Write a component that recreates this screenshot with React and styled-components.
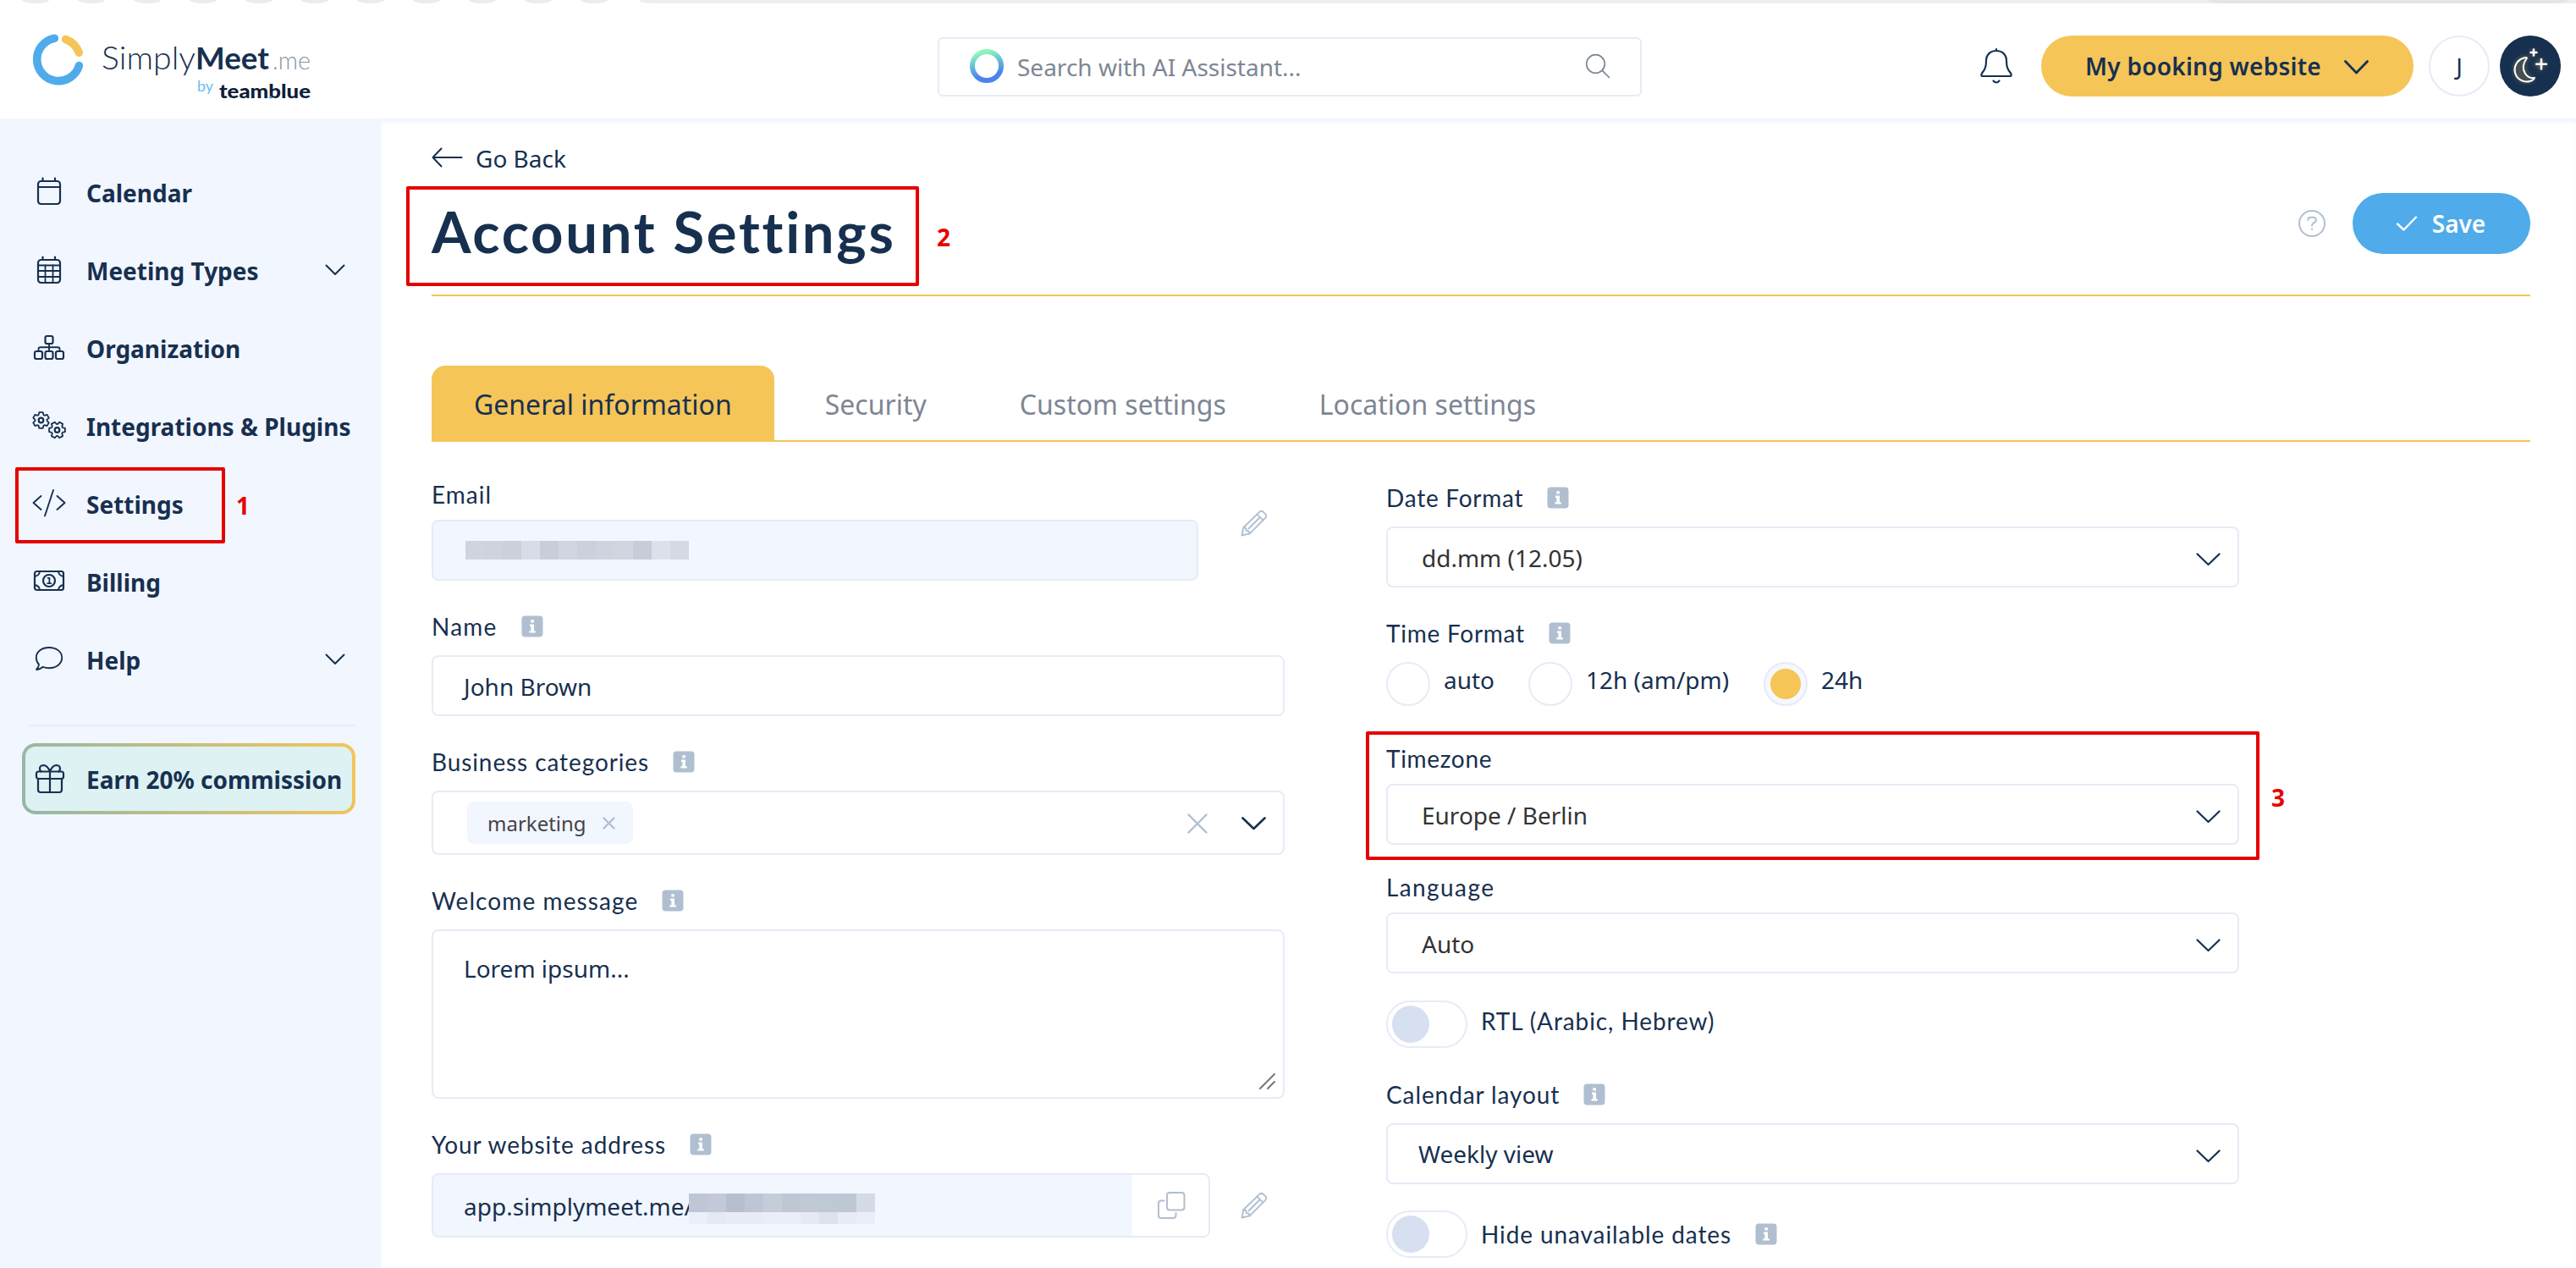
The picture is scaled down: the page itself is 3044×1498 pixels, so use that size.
import { useState } from "react";
import styled, { createGlobalStyle, css } from "styled-components";

const navy = "#17304f";
const yellow = "#f5c558";
const blue = "#4fabea";
const line = "#e7ebf7";
const pale = "#f2f6ff";
const grey = "#b0bfd0";
const red = "#e60000";
const sans = `"Noto Sans", "Open Sans", sans-serif`;
const round = `Lato, "Noto Sans", sans-serif`;

const GlobalStyle = createGlobalStyle`
  * { box-sizing: border-box; }
  body {
    margin: 0;
    background: #fff;
    color: ${navy};
    font-family: ${sans};
    font-size: 28px;
    line-height: 38px;
  }
  button { font: inherit; color: inherit; border: 0; background: none; padding: 0; }
`;

const Page = styled.div`
  position: relative;
  width: 3044px;
  height: 1498px;
  overflow: hidden;
`;

/* ---------- header ---------- */

const BrowserEdge = styled.div`
  display: flex;
  height: 4px;
  padding-left: 26px;
  gap: 34px;
  overflow: hidden;
`;

const EdgeDot = styled.i`
  width: 32px;
  height: 4px;
  background: #ececec;
  border-radius: 0 0 16px 16px / 0 0 4px 4px;
`;

const EdgeBar = styled.i`
  flex: 1;
  display: flex;
  justify-content: flex-end;
  padding-right: 10px;
  margin-left: 3px;
  background: #eeeeee;
  border-radius: 0 0 0 16px / 0 0 0 4px;

  &::after {
    content: "";
    width: 424px;
    background: #e5e5e5;
    border-radius: 0 0 16px 16px / 0 0 4px 4px;
  }
`;

const Header = styled.header`
  display: grid;
  grid-template-columns: 1070px 832px 1fr;
  align-items: center;
  height: 136px;
  padding: 12px 18px 0 38px;
`;

const SearchBox = styled.div`
  display: flex;
  align-items: center;
  height: 70px;
  margin-top: 2px;
  padding: 0 35px 2px 36px;
  border: 2px solid ${line};
  border-radius: 6px;
  color: #7d8694;
`;

const SearchText = styled.span`
  flex: 1;
  padding: 2px 0 0 16px;
`;

const HeaderTools = styled.div`
  display: flex;
  align-items: center;
  justify-content: flex-end;
`;

const SiteButton = styled.button`
  display: flex;
  align-items: center;
  width: 440px;
  height: 72px;
  margin-left: 33px;
  padding-left: 52px;
  gap: 27px;
  border-radius: 36px;
  background: ${yellow};
  font-weight: 600;
  letter-spacing: 0.25px;

  svg { margin-top: 3px; }
`;

const RoundButton = styled.button`
  display: flex;
  align-items: center;
  justify-content: center;
  width: 72px;
  height: 72px;
  margin-left: ${(p) => (p.$dark ? 12 : 18)}px;
  border-radius: 50%;
  border: ${(p) => (p.$dark ? "0" : `2px solid ${line}`)};
  background: ${(p) => (p.$dark ? navy : "#fff")};
`;

/* ---------- sidebar ---------- */

const Body = styled.div`
  display: flex;
  height: 1358px;
`;

const Sidebar = styled.nav`
  width: 450px;
  flex: none;
  padding-top: 41px;
  background: ${pale};
`;

const NavItem = styled.a`
  display: flex;
  align-items: center;
  height: 92px;
  padding: 0 42px 0 38px;
  gap: 24px;
  font-weight: 700;
  white-space: nowrap;

  span { flex: 1; padding-top: 2px; }
`;

const Divider = styled.hr`
  height: 2px;
  margin: 31px 30px 20px 34px;
  border: 0;
  background: #e6ebf7;
`;

const EarnLink = styled.a`
  display: flex;
  align-items: center;
  width: 394px;
  height: 84px;
  margin-left: 26px;
  padding: 2px 0 0 8px;
  gap: 24px;
  border: 4px solid transparent;
  border-radius: 16px;
  background: linear-gradient(#def1f3, #def1f3) padding-box,
    linear-gradient(75deg, #92b8a8, ${yellow}) border-box;
  font-weight: 700;
  white-space: nowrap;
`;

/* ---------- main ---------- */

const Main = styled.main`
  flex: 1;
  padding: 27px 54px 0 60px;
  box-shadow: inset 0 5px 4px -1px #eef5ff;
`;

const BackLink = styled.a`
  display: flex;
  align-items: center;
  gap: 15px;
  height: 38px;

  span { padding-top: 2px; }
`;

const TitleRow = styled.div`
  display: flex;
  justify-content: space-between;
  height: 145px;
  border-bottom: 2px solid ${yellow};
`;

const Title = styled.h1`
  margin: 28px 0 0;
  font: 700 67px/80px ${round};
  letter-spacing: 2.7px;
`;

const Actions = styled.div`
  display: flex;
  align-items: center;
  height: 72px;
  margin-top: 23px;
  gap: 31px;
`;

const SaveButton = styled.button`
  display: flex;
  align-items: center;
  justify-content: center;
  gap: 17px;
  width: 210px;
  height: 72px;
  padding-right: 2px;
  border-radius: 36px;
  background: ${blue};
  color: #fff;
  font-weight: 600;
`;

const Tabs = styled.div`
  display: flex;
  gap: 10px;
  height: 90px;
  margin-top: 82px;
  border-bottom: 2px solid ${yellow};
`;

const Tab = styled.button`
  padding: 4px 50px 0;
  font-size: 32px;
  color: #7d8694;
  ${(p) =>
    p.$active &&
    css`
      color: ${navy};
      background: ${yellow};
      border-radius: 16px 16px 0 0;
    `}
`;

const Columns = styled.div`
  display: grid;
  grid-template-columns: 1008px 1008px;
  column-gap: 120px;
`;

const Column = styled.div`
  display: flex;
  flex-direction: column;
  padding-top: ${(p) => p.$top}px;
`;

const Field = styled.div`
  margin-bottom: ${(p) => p.$space ?? 35}px;
`;

const Label = styled.div`
  display: flex;
  gap: 28px;
  height: ${(p) => (p.$info ? 53 : 49)}px;
  padding-top: 1px;
  font: 400 28px/36px ${round};
  letter-spacing: ${(p) => p.$ls ?? 0.9}px;
  white-space: nowrap;

  svg { margin-top: 5px; }
`;

const Control = styled.div`
  display: flex;
  align-items: center;
  width: ${(p) => p.$width ?? 1008}px;
  height: ${(p) => p.$height ?? 72}px;
  padding: 0 20px 0 ${(p) => p.$indent ?? 36}px;
  border: 2px solid ${line};
  border-radius: 8px;
  background: ${(p) => (p.$filled ? pale : "#fff")};
  color: ${(p) => (p.$dark ? "#333" : navy)};
  white-space: nowrap;
`;

const Value = styled.span`
  flex: ${(p) => (p.$fixed ? "none" : 1)};
  padding-top: ${(p) => (p.$high ? 0 : 2)}px;
`;

const ControlIcons = styled.span`
  display: flex;
  align-items: center;
  gap: 40px;
  margin-left: auto;
  padding-top: ${(p) => p.$drop ?? 6}px;
`;

const WithPencil = styled.div`
  display: flex;
  justify-content: space-between;
  align-items: ${(p) => (p.$raised ? "flex-start" : "center")};
  padding-right: 20px;

  > svg { margin-top: ${(p) => (p.$raised ? -12 : 0)}px; }
`;

const TextArea = styled.div`
  display: flex;
  justify-content: space-between;
  height: 200px;
  padding: 25px 8px 8px 36px;
  border: 2px solid ${line};
  border-radius: 8px;

  svg { align-self: flex-end; }
`;

const Tag = styled.span`
  display: flex;
  align-items: center;
  justify-content: space-between;
  width: 196px;
  height: 50px;
  padding: 1px 21px 0 24px;
  border-radius: 8px;
  background: ${pale};
  color: #444;
  font-size: 24px;
`;

const CopyCell = styled.div`
  display: flex;
  align-items: center;
  justify-content: center;
  width: 90px;
  height: 72px;
  margin: 0 -20px 0 auto;
  padding-left: 2px;
  border-radius: 0 6px 6px 0;
  background: #fff;
`;

const Mosaic = styled.div`
  display: grid;
  grid-template-columns: repeat(${(p) => p.$cols}, 22px);
  grid-template-rows: 22px ${(p) => (p.$cut ? "14px" : "")};
  margin: ${(p) => p.$margin ?? "0"};
`;

const Cell = styled.i`
  background: ${(p) => p.$color};
`;

const RadioGroup = styled.div`
  display: flex;
  height: 52px;
`;

const RadioOption = styled.label`
  display: flex;
  gap: 16px;
  width: ${(p) => p.$width}px;
  line-height: 43px;
`;

const RadioDot = styled.span`
  width: 52px;
  height: 52px;
  border: 2px solid ${line};
  border-radius: 50%;
  background: ${(p) =>
    p.$on ? `radial-gradient(circle, ${yellow} 17.5px, #f6f8ff 18.5px)` : "#fff"};
`;

const ToggleRow = styled.label`
  display: flex;
  height: 56px;
  gap: 16px;
  margin-bottom: ${(p) => p.$space}px;
`;

const Switch = styled.span`
  width: 96px;
  height: 56px;
  padding: 4px 5px;
  border: 2px solid ${line};
  border-radius: 28px;

  &::before {
    content: "";
    display: block;
    width: 44px;
    height: 44px;
    border-radius: 50%;
    background: #d7e0f0;
  }
`;

const ToggleText = styled(Label)`
  margin-top: ${(p) => p.$drop}px;
`;

/* ---------- numbered callouts lying over the page ---------- */

const Callout = styled.div`
  position: absolute;
  left: ${(p) => p.$x}px;
  top: ${(p) => p.$y}px;
  width: ${(p) => p.$w}px;
  height: ${(p) => p.$h}px;
  border: 4px solid ${red};
  border-radius: 2px;
`;

const CalloutNumber = styled.b`
  position: absolute;
  left: 100%;
  top: 50%;
  margin: ${(p) => p.$up}px 0 0 ${(p) => p.$gap}px;
  color: ${red};
  font-size: 28px;
`;

/* ---------- icons ---------- */

const Icon = styled.svg.attrs(({ $w = 40, $h = 40, $sw = 2.2, $color = navy }) => ({
  width: $w,
  height: $h,
  viewBox: `0 0 ${$w} ${$h}`,
  fill: "none",
  stroke: $color,
  strokeWidth: $sw,
  strokeLinecap: "round",
  strokeLinejoin: "round",
}))`
  flex: none;
`;

const Chevron = ({ w = 28, h = 16, sw = 2.4 }) => (
  <Icon $w={w} $h={h} $sw={sw}>
    <path d={`M1.5 1.5 L${w / 2} ${h - 2} L${w - 1.5} 1.5`} />
  </Icon>
);

const Cross = ({ size, sw }) => (
  <Icon $w={size} $h={size} $color={grey} $sw={sw}>
    <path d={`M1.5 1.5 L${size - 1.5} ${size - 1.5} M${size - 1.5} 1.5 L1.5 ${size - 1.5}`} />
  </Icon>
);

const Info = () => (
  <Icon $w={26} $h={26} $color="none">
    <rect x="0.5" y="0.5" width="25" height="25" rx="4" fill={grey} />
    <path
      d="M11.3 5.2h3.6v3.4h-3.6z M10 10.6h5v7.6h1.8v2.4H9.4v-2.4h2v-5.2H10z"
      fill="#fff"
    />
  </Icon>
);

const Pencil = () => (
  <Icon $w={32} $h={32} $color={grey} $sw={1.9}>
    <path d="M1.5 30.5 L3.5 21 L22.5 2.6 Q24.5 0.8 26.6 2.6 L29.6 5.6 Q31.2 7.6 29.4 9.6 L10.8 28.4 Z" />
    <path d="M19.5 5.6 L26.5 12.6 M3.5 21 L6.2 22 L7 25.2 L10 26 L10.8 28.4 M9.5 22.5 L22.5 9.5" />
  </Icon>
);

const Copy = () => (
  <Icon $w={34} $h={34} $color={grey} $sw={2}>
    <rect x="12" y="2" width="20.5" height="20.5" rx="3" />
    <path d="M8.5 11.5 H5 Q2 11.5 2 14.5 V29 Q2 32 5 32 H19.5 Q22.5 32 22.5 29 V26" />
  </Icon>
);

// six-toothed cog outline
const cogPath = (cx, cy, turn) => {
  const pts = [];
  for (let i = 0; i < 6; i++) {
    const a = (i * 60 + turn) * (Math.PI / 180);
    [
      [-0.42, 7],
      [-0.23, 9.7],
      [0.23, 9.7],
      [0.42, 7],
    ].forEach(([d, r]) => {
      pts.push(`${(cx + r * Math.cos(a + d)).toFixed(1)} ${(cy + r * Math.sin(a + d)).toFixed(1)}`);
    });
  }
  return `M${pts.join(" L")} Z`;
};

const icons = {
  calendar: (
    <>
      <rect x="7" y="7" width="26" height="27" rx="3.5" />
      <path d="M7 14 H33 M12.5 3.5 V7 M27 3.5 V7" />
    </>
  ),
  meeting: (
    <>
      <rect x="7" y="8" width="26" height="27" rx="3.5" />
      <path d="M7 14.5 H33 M12.5 4.5 V8 M27 4.5 V8" />
      <path d="M7 21 H33 M7 28 H33 M15.5 14.5 V35 M24.5 14.5 V35" strokeWidth="1.8" />
    </>
  ),
  organization: (
    <>
      <rect x="15.5" y="6" width="9" height="9" rx="2" />
      <rect x="3" y="24" width="9" height="9" rx="2" />
      <rect x="15.5" y="24" width="9" height="9" rx="2" />
      <rect x="28" y="24" width="9" height="9" rx="2" />
      <path d="M20 15 V24 M7.5 24 V21.5 Q7.5 19.2 9.8 19.2 H30.2 Q32.5 19.2 32.5 21.5 V24" strokeWidth="1.9" />
    </>
  ),
  plugins: (
    <>
      <path d={cogPath(10.5, 13.5, 30)} strokeWidth="1.8" />
      <path d={cogPath(29.5, 25, 0)} strokeWidth="1.8" />
      <circle cx="10.5" cy="13.5" r="2.8" />
      <circle cx="29.5" cy="25" r="2.8" />
    </>
  ),
  settings: (
    <path d="M10.5 11 L1.5 19 L10.5 27 M25 4 L15 34.5 M29.5 11 L38.5 19 L29.5 27" strokeWidth="1.9" />
  ),
  billing: (
    <>
      <rect x="3" y="8" width="34" height="22" rx="2.5" />
      <circle cx="20" cy="19" r="7" />
      <path d="M3 14 Q8.5 13 9 8 M31 8 Q31.5 13 37 14 M3 24 Q8.5 25 9 30 M31 30 Q31.5 25 37 24" strokeWidth="1.9" />
      <path d="M18.6 15.8 H20.4 V22 M18.2 22.2 H22.2" strokeWidth="1.8" />
    </>
  ),
  help: (
    <path d="M5 32 Q7.6 29.5 8 26 Q4.8 22.5 4.8 18 C4.8 10.8 11.5 6 20 6 C28.8 6 35.2 11 35.2 18 C35.2 25 28.8 30.2 20 30.2 Q16 30.2 12.5 28.8 Q9.5 31.8 5 32 Z" strokeWidth="1.9" />
  ),
  gift: (
    <>
      <path d="M7 19 V32 Q7 35 10 35 H32 Q35 35 35 32 V19 M21 10.5 V35" />
      <rect x="5" y="10.5" width="32" height="8.5" rx="2.5" />
      <path d="M21 10.5 Q18 3 13.3 3 Q9 3.2 9 7 Q9 9.5 10.5 10.5 M21 10.5 Q24 3 28.7 3 Q33 3.2 33 7 Q33 9.5 31.5 10.5" />
    </>
  ),
};

const Logo = () => (
  <svg width="332" height="84" viewBox="38 36 332 84">
    <g fill="none" strokeWidth="9.6" strokeLinecap="round">
      <path d="M64.3 45.3 A25.4 25.4 0 1 0 93.4 77.6" stroke={blue} />
      <path d="M77.6 46.4 A26 26 0 0 1 93.3 62.2" stroke={yellow} />
    </g>
    <g fontFamily="Lato, sans-serif">
      <text x="120" y="81.5" fontSize="37" fontWeight="300" fill={navy} textLength="111" lengthAdjust="spacingAndGlyphs">
        Simply
      </text>
      <text x="231" y="81.5" fontSize="37" fontWeight="700" fill={navy} textLength="87" lengthAdjust="spacingAndGlyphs">
        Meet
      </text>
      <text x="322" y="81.5" fontSize="29" fontWeight="300" fill="#8d95a3" textLength="45" lengthAdjust="spacingAndGlyphs">
        .me
      </text>
      <text x="233" y="107.5" fontSize="17" fill="#68bdf0" textLength="19" lengthAdjust="spacingAndGlyphs">
        by
      </text>
      <text x="259" y="115.5" fontSize="23" fontWeight="900" fill="#0d2038" textLength="108" lengthAdjust="spacingAndGlyphs">
        teamblue
      </text>
    </g>
    <circle cx="319.5" cy="115" r="1.6" fill={blue} />
  </svg>
);

const AssistantRing = () => (
  <svg width="40" height="40" viewBox="0 0 40 40">
    <defs>
      <linearGradient id="ring" x1="0" y1="0" x2="0.25" y2="1">
        <stop offset="0.1" stopColor="#8ff5bd" />
        <stop offset="0.5" stopColor="#66bdd8" />
        <stop offset="0.9" stopColor="#4c83ee" />
      </linearGradient>
    </defs>
    <circle cx="20" cy="20" r="17" fill="none" stroke="url(#ring)" strokeWidth="6" />
  </svg>
);

const Moon = () => (
  <Icon $w={44} $h={44} $color="#fff" $sw={2}>
    <defs>
      <filter id="glow" x="-40%" y="-40%" width="180%" height="180%">
        <feGaussianBlur stdDeviation="2.4" />
      </filter>
    </defs>
    <g filter="url(#glow)" stroke={yellow} strokeWidth="3" opacity="0.4">
      <path d="M18 12 A14 14 0 1 0 25 38 A17 17 0 0 1 18 12 Z M25 2.5 V10 M34 14 V26 M28 20 H40" />
    </g>
    <path
      d="M18 12.5 Q16 11.6 13.5 12.8 C6 15.5 2.5 22.5 3.8 29 C5.5 37.5 13.5 42 21.5 40 Q25.5 39 27 36 Q20 37 16 31 Q10.5 22.5 18 12.5 Z"
      fill="#44504f"
    />
    <path d="M26 2.5 V9.5 M22.5 6 H29.5 M35 14 V25.5 M29.2 19.8 H41" strokeWidth="2.6" />
  </Icon>
);

/* ---------- page parts ---------- */

const navItems = [
  { icon: "calendar", text: "Calendar" },
  { icon: "meeting", text: "Meeting Types", open: true },
  { icon: "organization", text: "Organization" },
  { icon: "plugins", text: "Integrations & Plugins" },
  { icon: "settings", text: "Settings" },
  { icon: "billing", text: "Billing" },
  { icon: "help", text: "Help", open: true },
];

const tabNames = ["General information", "Security", "Custom settings", "Location settings"];

const emailCells = [
  "#d0d4de", "#cfd3dd", "#ccd0db", "#d8dce6", "#c9cdda", "#d1d5e1",
  "#cccfdc", "#cfd3de", "#d1d5e0", "#c8ccd9", "#dce0ea", "#d5d9e4",
];

const addressCells = [
  "#bfc6d5", "#c3c9d8", "#b6bfd0", "#bec6d5", "#c6cdda", "#bfc7d5",
  "#c0c9d5", "#bfc8d5", "#bec7d4", "#d5dae7",
  "#eceff8", "#e5e9f3", "#e9ecf6", "#e8ebf6", "#ebeef8", "#ebeef8",
  "#e6e9f4", "#dce1ec", "#e8ebf6", "#ebeef9",
];

function FieldLabel({ text, info, ls }) {
  return (
    <Label $info={info} $ls={ls}>
      {text}
      {info && <Info />}
    </Label>
  );
}

function SelectField({ label, info, ls, value, space, plain }) {
  return (
    <Field $space={space}>
      <FieldLabel text={label} info={info} ls={ls} />
      <Control $dark={!plain} $indent={plain ? 36 : 40}>
        <Value $high={plain}>{value}</Value>
        <ControlIcons>
          <Chevron w={29} h={16} sw={2.2} />
        </ControlIcons>
      </Control>
    </Field>
  );
}

function TopBar() {
  return (
    <>
      <BrowserEdge>
        {Array.from({ length: 11 }, (_, i) => (
          <EdgeDot key={i} />
        ))}
        <EdgeBar />
      </BrowserEdge>
      <Header>
        <Logo />
        <SearchBox>
          <AssistantRing />
          <SearchText>Search with AI Assistant...</SearchText>
          <Icon $w={30} $h={30} $color="#7d8694" $sw={1.7}>
            <circle cx="12.5" cy="12.5" r="10.8" />
            <path d="M20.3 20.3 L28.5 28.5" />
          </Icon>
        </SearchBox>
        <HeaderTools>
          <Icon $w={40} $h={44}>
            <path d="M20 2 V4 M20 4 C12.5 4 8 9 8 16 C8 24 6 26.5 3 30.5 Q1.2 34 4 34 H36 Q38.8 34 37 30.5 C34 26.5 32 24 32 16 C32 9 27.5 4 20 4 Z" />
            <path d="M16.5 39.5 Q20 43.5 23.5 39.5" />
          </Icon>
          <SiteButton>
            My booking website
            <Chevron w={29} h={17} sw={2.8} />
          </SiteButton>
          <RoundButton>J</RoundButton>
          <RoundButton $dark>
            <Moon />
          </RoundButton>
        </HeaderTools>
      </Header>
    </>
  );
}

function SideNav() {
  return (
    <Sidebar>
      {navItems.map((item) => (
        <NavItem key={item.text}>
          <Icon>{icons[item.icon]}</Icon>
          <span>{item.text}</span>
          {item.open && <Chevron w={24} h={14} sw={2} />}
        </NavItem>
      ))}
      <Divider />
      <EarnLink>
        <Icon>{icons.gift}</Icon>
        Earn 20% commission
      </EarnLink>
    </Sidebar>
  );
}

function AccountColumn() {
  return (
    <Column $top={43}>
      <Field>
        <FieldLabel text="Email" ls={1} />
        <WithPencil $raised>
          <Control $filled $width={906} $indent={38}>
            <Mosaic $cols={12}>
              {emailCells.map((c, i) => (
                <Cell key={i} $color={c} />
              ))}
            </Mosaic>
          </Control>
          <Pencil />
        </WithPencil>
      </Field>
      <Field>
        <FieldLabel text="Name" info ls={1.2} />
        <Control>
          <Value>John Brown</Value>
        </Control>
      </Field>
      <Field>
        <FieldLabel text="Business categories" info />
        <Control $height={76} $indent={40}>
          <Tag>
            marketing
            <Cross size={15} sw={2.4} />
          </Tag>
          <ControlIcons $drop={2}>
            <Cross size={24} sw={2.4} />
            <Chevron w={29} h={16} sw={2.6} />
          </ControlIcons>
        </Control>
      </Field>
      <Field>
        <FieldLabel text="Welcome message" info ls={1.1} />
        <TextArea>
          Lorem ipsum...
          <Icon $w={22} $h={22} $color="#777" $sw={2}>
            <path d="M3 20 L20 3 M12 20 L20 12" />
          </Icon>
        </TextArea>
      </Field>
      <Field>
        <FieldLabel text="Your website address" info />
        <WithPencil>
          <Control $filled $width={920} $height={76}>
            <Value $fixed>app.simplymeet.me/</Value>
            <Mosaic $cols={10} $cut $margin="8px 0 0 -5px">
              {addressCells.map((c, i) => (
                <Cell key={i} $color={c} />
              ))}
            </Mosaic>
            <CopyCell>
              <Copy />
            </CopyCell>
          </Control>
          <Pencil />
        </WithPencil>
      </Field>
    </Column>
  );
}

function RegionColumn() {
  const [format, setFormat] = useState("24h");
  const formats = [
    { text: "auto", width: 168 },
    { text: "12h (am/pm)", width: 278 },
    { text: "24h", width: 120 },
  ];

  return (
    <Column $top={47}>
      <SelectField label="Date Format" info ls={0.75} value="dd.mm (12.05)" />
      <Field $space={43}>
        <FieldLabel text="Time Format" info ls={0.75} />
        <RadioGroup>
          {formats.map((f) => (
            <RadioOption key={f.text} $width={f.width} onClick={() => setFormat(f.text)}>
              <RadioDot $on={format === f.text} />
              {f.text}
            </RadioOption>
          ))}
        </RadioGroup>
      </Field>
      <SelectField label="Timezone" ls={0.7} value="Europe / Berlin" space={31} />
      <SelectField label="Language" ls={1.4} value="Auto" space={32} />
      <ToggleRow $space={36}>
        <Switch />
        <ToggleText $drop={5}>RTL (Arabic, Hebrew)</ToggleText>
      </ToggleRow>
      <SelectField label="Calendar layout" info value="Weekly view" space={31} plain />
      <ToggleRow $space={0}>
        <Switch />
        <ToggleText $drop={9}>
          Hide unavailable dates
          <Info />
        </ToggleText>
      </ToggleRow>
    </Column>
  );
}

function App() {
  const [tab, setTab] = useState(tabNames[0]);

  return (
    <Page>
      <GlobalStyle />
      <TopBar />
      <Body>
        <SideNav />
        <Main>
          <BackLink>
            <Icon $w={37} $h={24} $sw={2}>
              <path d="M35.5 12 H1.5 M11.5 1.5 L1.5 12 L11.5 22.5" />
            </Icon>
            <span>Go Back</span>
          </BackLink>
          <TitleRow>
            <Title>Account Settings</Title>
            <Actions>
              <Icon $w={34} $h={34} $color={grey} $sw={2}>
                <circle cx="17" cy="17" r="15" />
                <path d="M12.3 13 Q12.3 9.8 16 9.8 H18 Q21.8 9.8 21.8 13 Q21.8 15 19 16.4 Q17 17.4 17 19.6 M17 23.6 V24" />
              </Icon>
              <SaveButton>
                <Icon $w={26} $h={20} $color="#fff" $sw={2.4}>
                  <path d="M2 10.5 L9.5 17.5 L24 2.5" />
                </Icon>
                Save
              </SaveButton>
            </Actions>
          </TitleRow>
          <Tabs>
            {tabNames.map((name) => (
              <Tab key={name} $active={name === tab} onClick={() => setTab(name)}>
                {name}
              </Tab>
            ))}
          </Tabs>
          <Columns>
            <AccountColumn />
            <RegionColumn />
          </Columns>
        </Main>
      </Body>
      <Callout $x={18} $y={552} $w={248} $h={90}>
        <CalloutNumber $up={-19} $gap={17}>1</CalloutNumber>
      </Callout>
      <Callout $x={480} $y={220} $w={606} $h={118}>
        <CalloutNumber $up={-18} $gap={25}>2</CalloutNumber>
      </Callout>
      <Callout $x={1614} $y={864} $w={1056} $h={152}>
        <CalloutNumber $up={-17} $gap={18}>3</CalloutNumber>
      </Callout>
    </Page>
  );
}

export default App;
